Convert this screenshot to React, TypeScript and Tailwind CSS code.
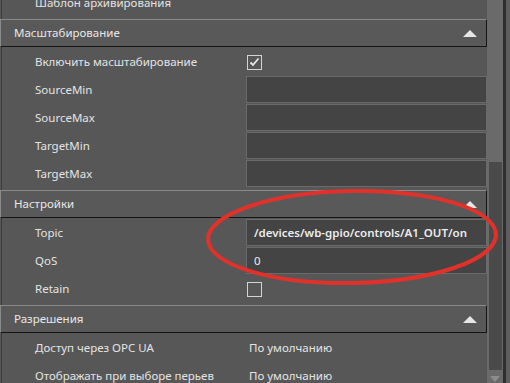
import React from "react";

const font = { fontFamily: '"Noto Sans", "Open Sans", sans-serif' };

function Header({ title }: { title: string }) {
  return (
    <div className="h-[28px] shrink-0 flex items-center justify-between pl-[13px] pr-[9px] bg-[#595959] border-t border-l border-t-[#8a8a8a] border-l-[#8a8a8a] border-b border-r border-b-[#141414] border-r-[#141414] text-[11.5px] text-[#e8e8e8]">
      <span>{title}</span>
      <svg width="14" height="7" viewBox="0 0 14 7">
        <polygon points="0,7 7,0 14,7" fill="#e6e6e6" />
      </svg>
    </div>
  );
}

function Row({ label, children }: { label: string; children?: React.ReactNode }) {
  return (
    <div className="h-[28px] shrink-0 flex">
      <div className="w-[244px] shrink-0 pl-[33px] flex items-center text-[11.5px] text-[#e4e4e4]">{label}</div>
      <div className="flex-1 min-w-0">{children}</div>
    </div>
  );
}

function Input({ value, bold }: { value?: string; bold?: boolean }) {
  return (
    <div
      className={
        "h-[27px] bg-[#444444] border border-[#6a6a6a] flex items-center pl-[7px] text-[11.5px] text-[#ececec] whitespace-nowrap overflow-hidden " +
        (bold ? "font-semibold text-[11.3px]" : "")
      }
    >
      {value}
    </div>
  );
}

function Check({ checked }: { checked?: boolean }) {
  return (
    <div className="h-full flex items-center pl-px">
      <div className="w-[15px] h-[15px] border border-[#d4d4d4] flex items-center justify-center">
        {checked && (
          <svg width="11" height="10" viewBox="0 0 11 10">
            <path d="M1.5 5.5 L4 8 L9.5 1.5" stroke="#e8e8e8" strokeWidth="1.8" fill="none" />
          </svg>
        )}
      </div>
    </div>
  );
}

function Plain({ value }: { value: string }) {
  return <div className="h-full flex items-center pl-[3px] text-[11.5px] text-[#e4e4e4]">{value}</div>;
}

export default function App() {
  return (
    <div className="w-[510px] h-[383px] overflow-hidden bg-[#575757] flex relative" style={font}>
      <div className="w-[487px] shrink-0 flex flex-col overflow-hidden">
        <div className="shrink-0 -mt-[11px] pb-[2px] border-l border-[#3c3c3c] ml-px">
          <Row label="Шаблон архивирования" />
        </div>
        <Header title="Масштабирование" />
        <div className="shrink-0 pt-px pb-[2px] border-l border-[#3c3c3c] ml-px">
          <Row label="Включить масштабирование">
            <Check checked />
          </Row>
          <Row label="SourceMin">
            <Input />
          </Row>
          <Row label="SourceMax">
            <Input />
          </Row>
          <Row label="TargetMin">
            <Input />
          </Row>
          <Row label="TargetMax">
            <Input />
          </Row>
        </div>
        <Header title="Настройки" />
        <div className="shrink-0 pt-px pb-[2px] border-l border-[#3c3c3c] ml-px">
          <Row label="Topic">
            <Input value="/devices/wb-gpio/controls/A1_OUT/on" bold />
          </Row>
          <Row label="QoS">
            <Input value="0" />
          </Row>
          <Row label="Retain">
            <Check />
          </Row>
        </div>
        <Header title="Разрешения" />
        <div className="shrink-0 pt-px border-l border-[#3c3c3c] ml-px">
          <Row label="Доступ через OPC UA">
            <Plain value="По умолчанию" />
          </Row>
          <Row label="Отображать при выборе перьев">
            <Plain value="По умолчанию" />
          </Row>
        </div>
      </div>

      {/* scrollbar */}
      <div className="w-[16px] shrink-0 bg-[#6a6a6a] flex flex-col pt-[162px] pl-[2px] pr-px">
        <div className="h-[208px] shrink-0 bg-[#4a4a4a]" />
        <div className="flex justify-center pt-[6px] pr-px">
          <svg width="10" height="6" viewBox="0 0 10 6">
            <polygon points="0,0 10,0 5,6" fill="#8c8c8c" />
          </svg>
        </div>
      </div>
      <div className="w-[3px] shrink-0 bg-[#2e2e2e]" />
      <div className="flex-1 bg-[#5e5e5e]" />

      {/* red annotation */}
      <svg className="absolute left-0 top-0 pointer-events-none" width="510" height="383">
        <ellipse cx="352" cy="237" rx="144" ry="46" fill="none" stroke="#e0322b" strokeWidth="4" transform="rotate(-1 352 237)" />
      </svg>
    </div>
  );
}
